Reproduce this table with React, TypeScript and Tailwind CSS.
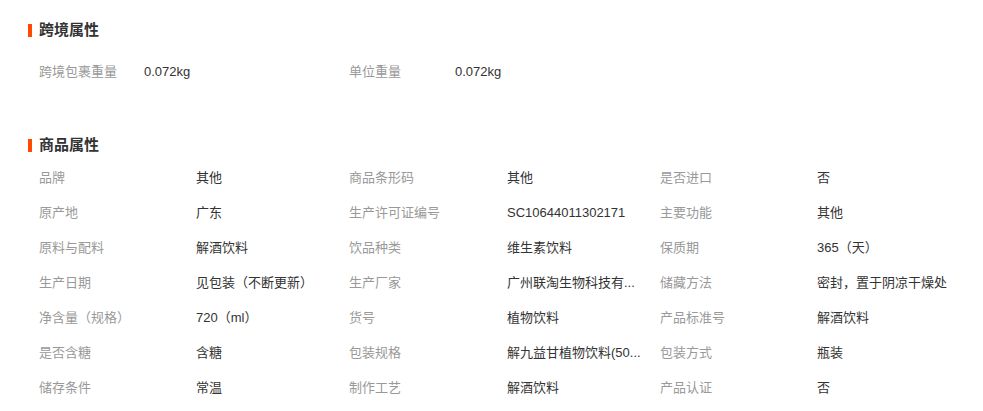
import React from "react";

const font = { fontFamily: '"Liberation Sans", "Noto Sans CJK SC", sans-serif' };

function Title({ text }: { text: string }) {
  return (
    <div className="flex items-center h-[20px]">
      <div className="w-[4px] h-[13px] bg-[#ff4a00] mr-[7px]" />
      <div className="text-[15px] font-bold text-[#333] leading-[20px]">{text}</div>
    </div>
  );
}

const rows: [string, string][][] = [
  [["品牌", "其他"], ["商品条形码", "其他"], ["是否进口", "否"]],
  [["原产地", "广东"], ["生产许可证编号", "SC10644011302171"], ["主要功能", "其他"]],
  [["原料与配料", "解酒饮料"], ["饮品种类", "维生素饮料"], ["保质期", "365（天）"]],
  [["生产日期", "见包装（不断更新）"], ["生产厂家", "广州联淘生物科技有..."], ["储藏方法", "密封，置于阴凉干燥处"]],
  [["净含量（规格）", "720（ml）"], ["货号", "植物饮料"], ["产品标准号", "解酒饮料"]],
  [["是否含糖", "含糖"], ["包装规格", "解九益甘植物饮料(50..."], ["包装方式", "瓶装"]],
  [["储存条件", "常温"], ["制作工艺", "解酒饮料"], ["产品认证", "否"]],
];

export default function App() {
  return (
    <div className="w-[983px] h-[411px] bg-white pt-[20px] pl-[28px] overflow-hidden" style={font}>
      <Title text="跨境属性" />
      <div className="ml-[11px] mt-[14px] grid grid-cols-[105px_205px_106px_1fr] h-[35px] items-center text-[13px]">
        <div className="text-[#999]">跨境包裹重量</div>
        <div className="text-[#333]">0.072kg</div>
        <div className="text-[#999]">单位重量</div>
        <div className="text-[#333]">0.072kg</div>
      </div>
      <div className="mt-[46px]">
        <Title text="商品属性" />
      </div>
      <div className="ml-[11px] mt-[5px] flex flex-col text-[13px]">
        {rows.map((r, i) => (
          <div key={i} className="grid grid-cols-[157px_153px_158px_153px_157px_1fr] h-[35px] items-center">
            {r.map(([k, v], j) => (
              <React.Fragment key={j}>
                <div className="text-[#999] whitespace-nowrap">{k}</div>
                <div className="text-[#333] whitespace-nowrap">{v}</div>
              </React.Fragment>
            ))}
          </div>
        ))}
      </div>
    </div>
  );
}
